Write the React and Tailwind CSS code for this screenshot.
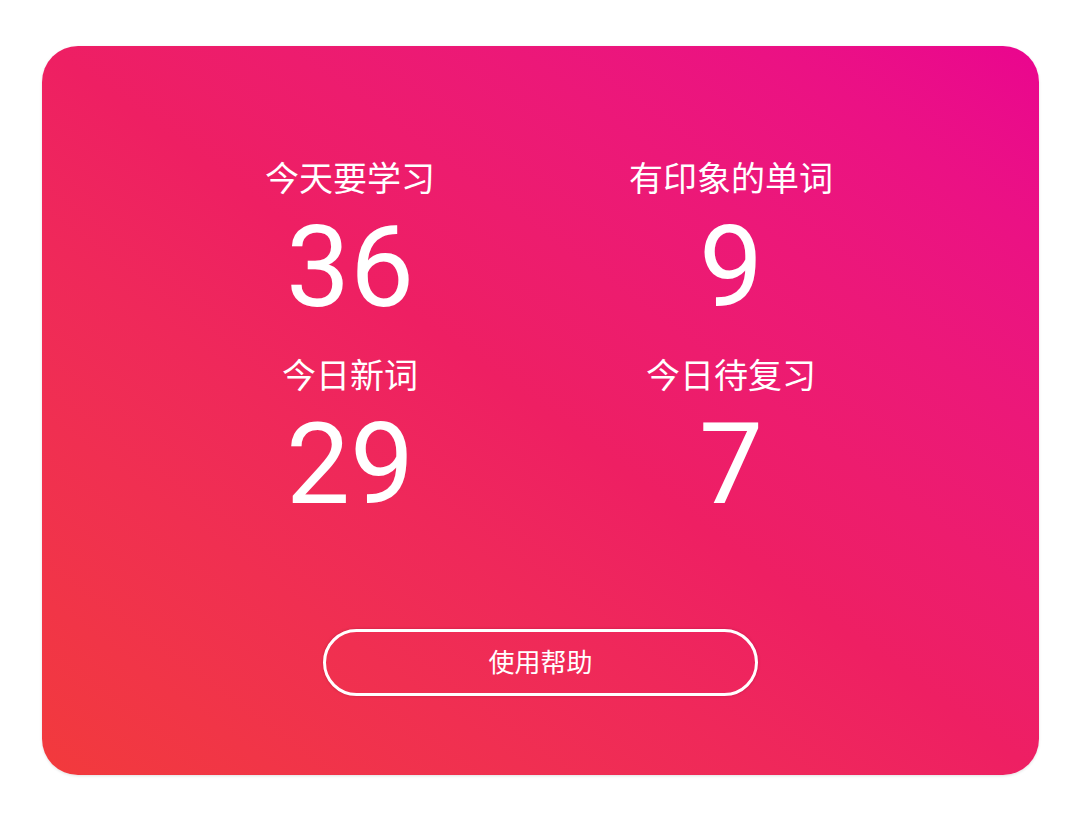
import React from 'react';

const stats = [
  { label: '今天要学习', value: 36 },
  { label: '有印象的单词', value: 9 },
  { label: '今日新词', value: 29 },
  { label: '今日待复习', value: 7 },
];

export default function App() {
  return (
    <div className="min-h-[814px] w-full bg-white pt-[46px] pl-[42px] pr-[41px]" style={{ fontFamily: 'Roboto, "Noto Sans CJK SC", sans-serif' }}>
      <div className="flex h-[729px] flex-col items-center rounded-[36px] bg-gradient-to-tr from-[#f23a3c] via-[#ee1f63] to-[#ea058f] pt-[111px] text-white shadow-[0_1px_3px_rgba(0,0,0,0.12)]">
        {/* Stats */}
        <div className="grid w-[762px] grid-cols-2 gap-y-[30px]">
          {stats.map((s) => (
            <div key={s.label} className="flex flex-col items-center">
              <div className="h-[40px] text-[34px] leading-[40px]" style={{ fontFamily: '"Noto Sans CJK SC", sans-serif' }}>
                {s.label}
              </div>
              <div className="mt-[13px] h-[114px] text-[114px] leading-[114px]">{s.value}</div>
            </div>
          ))}
        </div>

        {/* Help button */}
        <button className="mt-[108px] flex h-[67px] w-[435px] items-center justify-center rounded-full border-[3px] border-white pb-[4px] text-[26px] text-white shadow-[0_0_3px_rgba(120,0,40,0.35)]" style={{ fontFamily: '"Noto Sans CJK SC", sans-serif' }}>
          使用帮助
        </button>
      </div>
    </div>
  );
}
